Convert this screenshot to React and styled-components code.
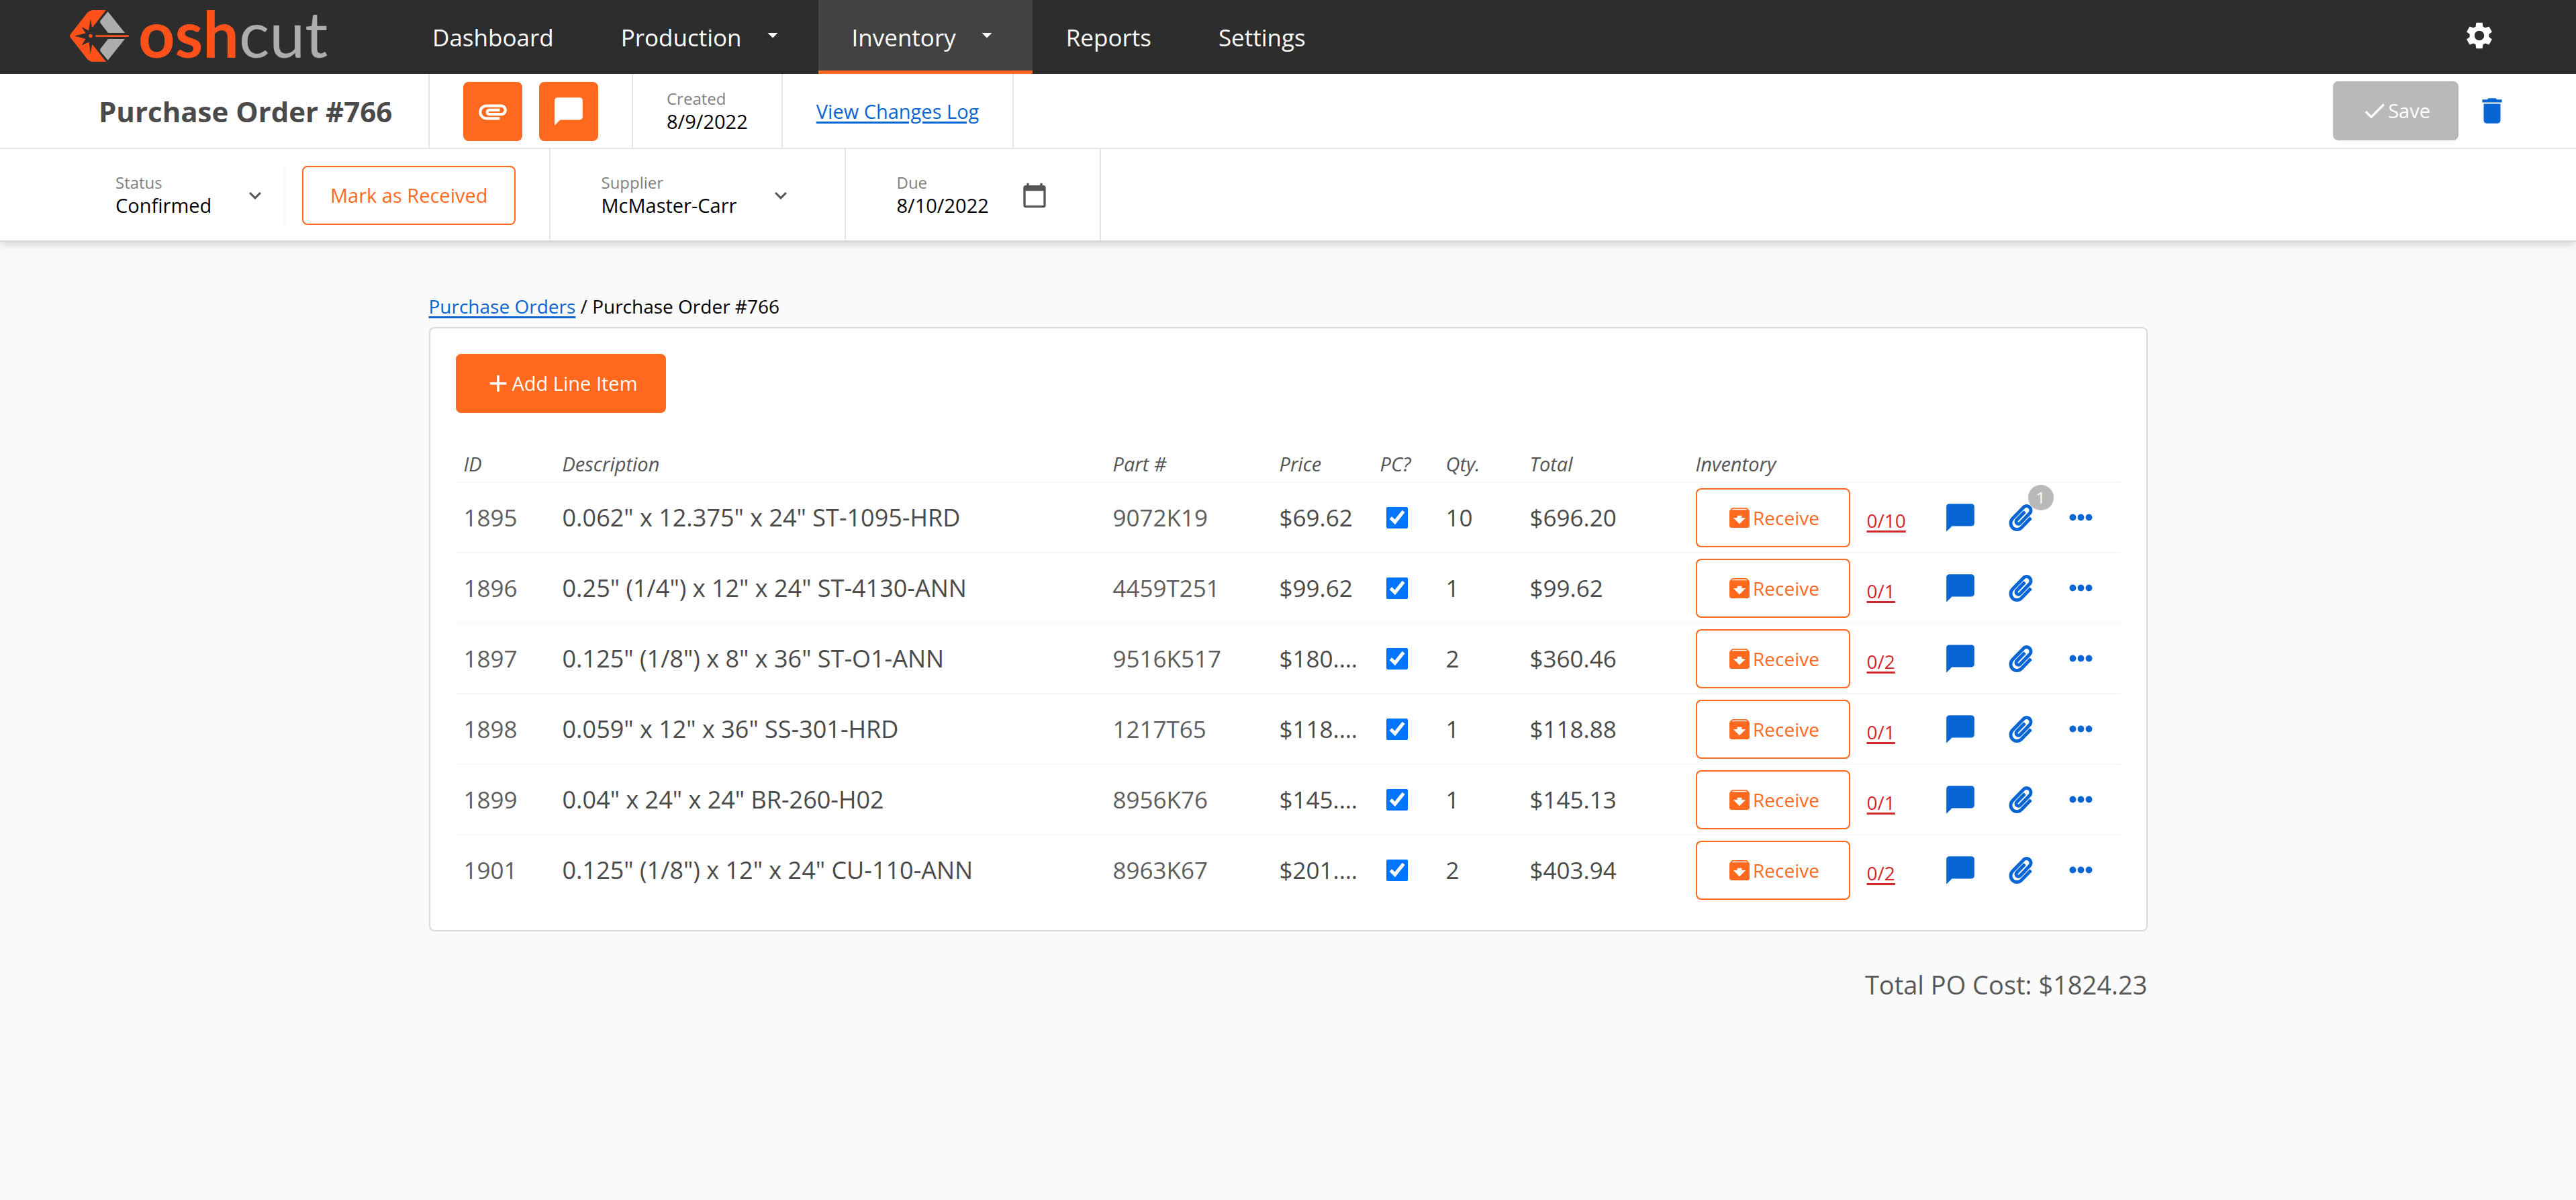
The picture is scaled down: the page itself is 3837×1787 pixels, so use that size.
import React from 'react';
import styled, { createGlobalStyle } from 'styled-components';
import {
  MdSettings,
  MdDelete,
  MdChatBubble,
  MdAttachment,
  MdArchive,
  MdCalendarToday,
  MdCheck,
  MdAdd,
  MdExpandMore,
  MdArrowDropDown,
} from 'react-icons/md';
import { FaPaperclip, FaEllipsisH } from 'react-icons/fa';

const orange = '#ff691d';
const blue = '#0866d4';
const rule = '#e6e6e6';
const dark = '#2d2d2d';

const GlobalStyle = createGlobalStyle`
  *, *::before, *::after { box-sizing: border-box; }
  body {
    margin: 0;
    background: #fafafa;
    color: #000;
    font-family: "Open Sans", "Noto Sans", sans-serif;
    font-size: 29px;
    line-height: 38px;
  }
  button, input, select { font: inherit; color: inherit; }
  svg { display: block; flex: none; }
`;

/* ---------- top navigation ---------- */

const NavBar = styled.header`
  display: flex;
  height: 110px;
  padding-right: 119px;
  background: ${dark};
  color: #fff;
`;

const Logo = styled.a`
  display: flex;
  align-items: center;
  gap: 12px;
  width: 594px;
  padding: 0 0 2px 104px;
  text-decoration: none;
`;

const Wordmark = styled.span`
  padding-bottom: 10px;
  font-family: Lato, sans-serif;
  font-size: 95px;
  line-height: 98px;
  font-weight: 700;
  color: #ff5119;
`;

const WordmarkTail = styled.span`
  font-weight: 400;
  color: #adadad;
`;

const NavLinks = styled.nav`
  display: flex;
  flex: 1;
`;

const NavLink = styled.a`
  display: flex;
  align-items: center;
  gap: 28px;
  padding: 6px 50px 0;
  border-bottom: 5px solid ${(p) => (p.$active ? orange : 'transparent')};
  background: ${(p) => (p.$active ? '#424242' : 'transparent')};
  color: #fff;
  font-size: 35px;
  text-decoration: none;
`;

const Caret = styled(MdArrowDropDown)`
  margin-bottom: 8px;
`;

const IconButton = styled.button`
  position: relative;
  display: flex;
  align-items: center;
  justify-content: center;
  width: 50px;
  height: 50px;
  padding: 0;
  border: 0;
  background: none;
  color: ${(p) => (p.$light ? '#fff' : blue)};
  cursor: pointer;
`;

const NavTools = styled.div`
  display: flex;
  align-items: center;
  padding-bottom: 4px;
`;

/* ---------- order header ---------- */

const OrderHeader = styled.section`
  border-bottom: 2px solid #d8d8d8;
  background: #fff;
  box-shadow: 0 4px 12px rgba(0, 0, 0, 0.16);
`;

const Bar = styled.div`
  display: flex;
  height: ${(p) => (p.$tall ? 136 : 112)}px;
  padding: 0 100px 0 147px;
  border-bottom: ${(p) => (p.$tall ? 0 : 2)}px solid ${rule};
`;

const Cell = styled.div`
  display: flex;
  flex-direction: ${(p) => (p.$stack ? 'column' : 'row')};
  align-items: ${(p) => (p.$stack ? 'flex-start' : 'center')};
  justify-content: center;
  gap: ${(p) => (p.$stack ? 0 : 25)}px;
  padding: 2px 50px 0 ${(p) => (p.$first ? 0 : 50)}px;
  border-right: 2px solid ${rule};
`;

const BarActions = styled.div`
  display: flex;
  align-items: center;
  gap: 25px;
  margin-left: auto;
`;

const Title = styled.h1`
  width: 441px;
  margin: 0;
  color: #4a4a4a;
  font-size: 42px;
  line-height: 56px;
  font-weight: 700;
  white-space: nowrap;
`;

const Caption = styled.label`
  color: #808080;
  font-size: 24px;
  line-height: 30px;
`;

const Link = styled.a`
  color: ${(p) => (p.$alert ? '#d0292d' : blue)};
  text-decoration: underline;
  text-decoration-thickness: 3px;
  text-underline-offset: 4px;
  text-decoration-skip-ink: ${(p) => (p.$alert ? 'none' : 'auto')};
`;

const Button = styled.button`
  display: inline-flex;
  align-items: center;
  justify-content: center;
  height: 88px;
  padding: 0 ${(p) => (p.$square ? 17 : 40)}px;
  border: 2px solid ${(p) => (p.$muted ? '#b9b9b9' : orange)};
  border-radius: 8px;
  background: ${(p) => (p.$outline ? '#fff' : p.$muted ? '#b9b9b9' : orange)};
  color: ${(p) => (p.$outline ? orange : '#fff')};
  white-space: nowrap;
  cursor: pointer;
`;

const ReceiveButton = styled(Button)`
  display: flex;
  width: 230px;
  padding: 0;
  font-size: 28px;
`;

const FieldBox = styled.div`
  display: flex;
  align-items: center;
  height: 88px;
  padding: 0 25px;
  border-right: 2px solid ${(p) => (p.$divided ? '#f7f7f7' : 'transparent')};
`;

const FieldBody = styled.div`
  position: relative;
  display: flex;
  flex-direction: column;
  width: ${(p) => (p.$wide ? 286 : 226)}px;
`;

const Select = styled.select`
  width: 100%;
  height: 38px;
  padding: 0;
  border: 0;
  appearance: none;
  background: none;
  color: #000;
`;

const DateInput = styled.input`
  width: 160px;
  height: 38px;
  padding: 0;
  border: 0;
  background: none;
`;

const FieldIcon = styled.span`
  position: absolute;
  top: 50%;
  right: 0;
  transform: translateY(-50%);
  color: #555;
  pointer-events: none;
`;

/* ---------- content ---------- */

const Main = styled.main`
  max-width: 2560px;
  margin: 0 auto;
  padding-top: 76px;
`;

const Breadcrumb = styled.nav`
  margin-bottom: 11px;
  font-size: 28px;
  line-height: 40px;
`;

const Card = styled.section`
  padding: 38px;
  border: 2px solid #d8d8d8;
  border-radius: 8px;
  background: #fff;
`;

const Table = styled.table`
  width: 100%;
  margin-top: 50px;
  border-collapse: separate;
  border-spacing: 0;
  table-layout: fixed;
  color: #4a4a4a;
`;

const Col = styled.col`
  width: ${(p) => (p.$w ? `${p.$w}px` : 'auto')};
`;

const Th = styled.th`
  height: 54px;
  padding: 0 12px;
  border-bottom: 2px solid #f8f8f8;
  color: #555;
  font-style: italic;
  font-weight: 400;
  text-align: left;
`;

const Td = styled.td`
  height: 105px;
  padding: 0 12px;
  border-bottom: 2px solid #f8f8f8;
  color: ${(p) => (p.$soft ? '#5e5e5e' : 'inherit')};
  font-size: 35px;
  line-height: 48px;
  white-space: nowrap;
  text-overflow: ellipsis;
  overflow: ${(p) => (p.$clip ? 'hidden' : 'visible')};

  tr:last-child > & {
    height: 103px;
    border-bottom: 0;
  }
`;

const DescriptionTd = styled(Td)`
  font-size: 36px;
`;

const CountTd = styled(Td)`
  padding-top: 8px;
  font-size: 28px;
`;

const Checkbox = styled.input`
  display: block;
  width: 32px;
  height: 32px;
  margin: 0 9px;
  accent-color: #0075ff;
`;

const RowActions = styled.div`
  display: flex;
  gap: 40px;
`;

const Badge = styled.span`
  position: absolute;
  top: -24px;
  right: -24px;
  width: 38px;
  height: 38px;
  border-radius: 50%;
  background: #b9b9b9;
  color: #fff;
  font-size: 24px;
  line-height: 38px;
  text-align: center;
`;

const GrandTotal = styled.p`
  margin: 49px 0 0;
  color: #595959;
  font-size: 38px;
  line-height: 60px;
  text-align: right;
`;

const items = [
  { id: 1895, desc: '0.062" x 12.375" x 24" ST-1095-HRD', part: '9072K19', price: '$69.62', qty: 10, total: '$696.20', files: 1 },
  { id: 1896, desc: '0.25" (1/4") x 12" x 24" ST-4130-ANN', part: '4459T251', price: '$99.62', qty: 1, total: '$99.62' },
  { id: 1897, desc: '0.125" (1/8") x 8" x 36" ST-O1-ANN', part: '9516K517', price: '$180.23', qty: 2, total: '$360.46' },
  { id: 1898, desc: '0.059" x 12" x 36" SS-301-HRD', part: '1217T65', price: '$118.88', qty: 1, total: '$118.88' },
  { id: 1899, desc: '0.04" x 24" x 24" BR-260-H02', part: '8956K76', price: '$145.13', qty: 1, total: '$145.13' },
  { id: 1901, desc: '0.125" (1/8") x 12" x 24" CU-110-ANN', part: '8963K67', price: '$201.97', qty: 2, total: '$403.94' },
];

const columns = [
  ['ID', 147],
  ['Description', 0],
  ['Part #', 248],
  ['Price', 150],
  ['PC?', 98],
  ['Qty.', 125],
  ['Total', 247],
  ['Inventory', 255],
  ['', 114],
  ['', 276],
];

function LogoMark() {
  return (
    <svg width="90" height="78" viewBox="0 0 90 78" aria-hidden="true">
      <path
        fill="#ff5119"
        d="M54 0H35q-5 0-9 4L1 36q-2 2.500 0 5l25 32q4 4 9 4h19L34 51.500V25.500z"
      />
      <path
        fill={dark}
        d="M31 13l2 12.500h2v26h-2L31 66l-2.500-18.500-11 5 6-9.500L7 38.500l16.500-4-6-9.500L28 30.500z"
      />
      <path fill="#adadad" d="M56.700 2.300L82 34H57L45.300 19v-3z" />
      <path fill="#adadad" d="M56.700 74.700L82 43H57L45.300 58v3z" />
      <circle cx="31" cy="38.500" r="2.700" fill="#ff5119" />
      <rect x="38" y="37.200" width="50" height="2.800" rx="1.400" fill="#ff5119" />
    </svg>
  );
}

function SelectField({ id, label, value, options, wide, divided }) {
  return (
    <FieldBox $divided={divided}>
      <FieldBody $wide={wide}>
        <Caption htmlFor={id}>{label}</Caption>
        <Select id={id} defaultValue={value}>
          {options.map((o) => (
            <option key={o}>{o}</option>
          ))}
        </Select>
        <FieldIcon>
          <MdExpandMore size={36} />
        </FieldIcon>
      </FieldBody>
    </FieldBox>
  );
}

function LineItem({ item }) {
  return (
    <tr>
      <Td $soft>{item.id}</Td>
      <DescriptionTd>{item.desc}</DescriptionTd>
      <Td $soft>{item.part}</Td>
      <Td $clip>{item.price}</Td>
      <Td>
        <Checkbox type="checkbox" defaultChecked aria-label={`PC? ${item.id}`} />
      </Td>
      <Td>{item.qty}</Td>
      <Td>{item.total}</Td>
      <Td>
        <ReceiveButton type="button" $outline>
          <MdArchive size={40} />
          Receive
        </ReceiveButton>
      </Td>
      <CountTd>
        <Link $alert href="#received">{`0/${item.qty}`}</Link>
      </CountTd>
      <Td>
        <RowActions>
          <IconButton type="button" aria-label="Comments">
            <MdChatBubble size={50} />
          </IconButton>
          <IconButton type="button" aria-label="Attachments">
            <FaPaperclip size={40} />
            {item.files && <Badge>{item.files}</Badge>}
          </IconButton>
          <IconButton type="button" aria-label="More">
            <FaEllipsisH size={35} />
          </IconButton>
        </RowActions>
      </Td>
    </tr>
  );
}

export default function App() {
  return (
    <>
      <GlobalStyle />
      <NavBar>
        <Logo href="#home">
          <LogoMark />
          <Wordmark>
            osh<WordmarkTail>cut</WordmarkTail>
          </Wordmark>
        </Logo>
        <NavLinks>
          <NavLink href="#dashboard">Dashboard</NavLink>
          <NavLink href="#production">
            Production
            <Caret size={36} />
          </NavLink>
          <NavLink href="#inventory" $active>
            Inventory
            <Caret size={36} />
          </NavLink>
          <NavLink href="#reports">Reports</NavLink>
          <NavLink href="#settings">Settings</NavLink>
        </NavLinks>
        <NavTools>
          <IconButton type="button" $light aria-label="Account settings">
            <MdSettings size={48} />
          </IconButton>
        </NavTools>
      </NavBar>

      <OrderHeader>
        <Bar>
          <Cell $first>
            <Title>Purchase Order #766</Title>
          </Cell>
          <Cell>
            <Button type="button" $square aria-label="Attachments">
              <MdAttachment size={50} />
            </Button>
            <Button type="button" $square aria-label="Comments">
              <MdChatBubble size={50} />
            </Button>
          </Cell>
          <Cell $stack>
            <Caption as="span">Created</Caption>
            <span>8/9/2022</span>
          </Cell>
          <Cell>
            <Link href="#log">View Changes Log</Link>
          </Cell>
          <BarActions>
            <Button type="button" $muted>
              <MdCheck size={40} />
              Save
            </Button>
            <IconButton type="button" aria-label="Delete order">
              <MdDelete size={50} />
            </IconButton>
          </BarActions>
        </Bar>
        <Bar $tall>
          <Cell $first>
            <SelectField id="status" label="Status" value="Confirmed" options={['Draft', 'Confirmed', 'Received']} divided />
            <Button type="button" $outline>
              Mark as Received
            </Button>
          </Cell>
          <Cell>
            <SelectField id="supplier" label="Supplier" value="McMaster-Carr" options={['McMaster-Carr']} wide />
          </Cell>
          <Cell>
            <FieldBox>
              <FieldBody>
                <Caption htmlFor="due">Due</Caption>
                <DateInput id="due" type="text" defaultValue="8/10/2022" />
                <FieldIcon>
                  <MdCalendarToday size={40} />
                </FieldIcon>
              </FieldBody>
            </FieldBox>
          </Cell>
        </Bar>
      </OrderHeader>

      <Main>
        <Breadcrumb>
          <Link href="#orders">Purchase Orders</Link> / Purchase Order #766
        </Breadcrumb>
        <Card>
          <Button type="button">
            <MdAdd size={42} />
            Add Line Item
          </Button>
          <Table>
            <colgroup>
              {columns.map(([, w], i) => (
                <Col key={i} $w={w} />
              ))}
            </colgroup>
            <thead>
              <tr>
                {columns.map(([name], i) => (
                  <Th key={i} scope="col">
                    {name}
                  </Th>
                ))}
              </tr>
            </thead>
            <tbody>
              {items.map((item) => (
                <LineItem key={item.id} item={item} />
              ))}
            </tbody>
          </Table>
        </Card>
        <GrandTotal>Total PO Cost: $1824.23</GrandTotal>
      </Main>
    </>
  );
}
